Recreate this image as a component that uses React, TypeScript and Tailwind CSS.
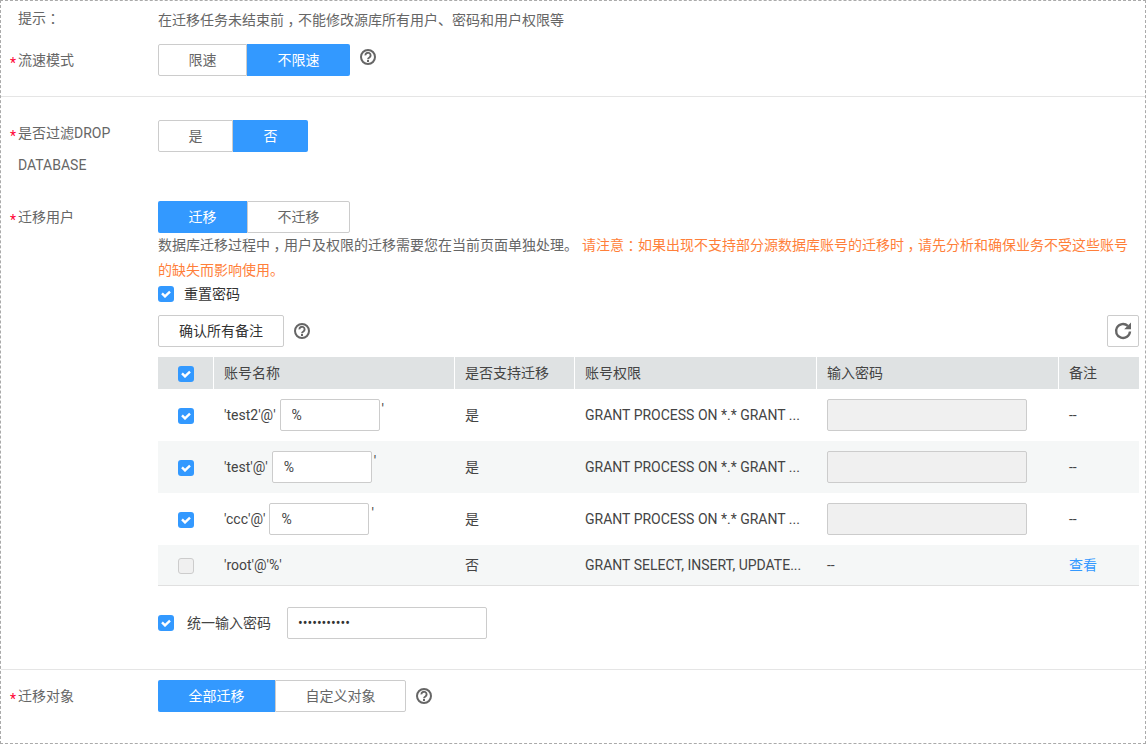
import { ReactNode } from "react";

function HelpIcon() {
  return (
    <svg width="16" height="16" viewBox="0 0 16 16" fill="none" className="shrink-0">
      <circle cx="8" cy="8" r="7" stroke="#666" strokeWidth="2" />
      <path d="M5.4 6.4a2.6 2.6 0 1 1 4 2.1c-.9.6-1.4 1-1.4 1.8" stroke="#666" strokeWidth="1.9" />
      <rect x="7" y="11" width="2" height="2" fill="#666" />
    </svg>
  );
}

function RefreshIcon() {
  return (
    <svg width="20" height="20" viewBox="0 0 20 20" fill="none">
      <path d="M17 10.5a7 7 0 1 1-2.2-5.6" stroke="#666" strokeWidth="2.4" />
      <path d="M18 1.5v6.8h-6.8z" fill="#666" />
    </svg>
  );
}

function Check({ off }: { off?: boolean }) {
  if (off) {
    return <span className="block w-4 h-4 rounded-[3px] border border-[#ccc] bg-[#f0f0f0] shrink-0" />;
  }
  return (
    <span className="flex items-center justify-center w-4 h-4 rounded-[3px] bg-[#3399ff] shrink-0">
      <svg width="10" height="8" viewBox="0 0 10 8" fill="none">
        <path d="M1 3.4l3 3 5-4.8" stroke="#fff" strokeWidth="2.4" />
      </svg>
    </span>
  );
}

function Toggle({ items, active }: { items: [string, number][]; active: number }) {
  return (
    <div className="flex h-8">
      {items.map(([label, width], i) => (
        <div
          key={label}
          style={{ width }}
          className={
            i === active
              ? "flex items-center justify-center bg-[#3399ff] text-white first:rounded-l-[2px] last:rounded-r-[2px]"
              : "flex items-center justify-center border border-[#ccc] bg-white text-[#666] first:rounded-l-[2px] last:rounded-r-[2px]"
          }
        >
          {label}
        </div>
      ))}
    </div>
  );
}

function Label({ children }: { children: ReactNode }) {
  return (
    <div className="w-[158px] shrink-0 pl-[10px] leading-8 text-[#666]">
      <span className="relative top-[3px] inline-block w-2 text-[#ff0033]">*</span>
      {children}
    </div>
  );
}

// the reference centres these two marks in their cell
function Mark({ children }: { children: ReactNode }) {
  return <span className="inline-block w-[14px] text-center [font-feature-settings:'halt']">{children}</span>;
}

const grantProcess = "GRANT PROCESS ON *.* GRANT ...";

const rows = [
  { name: "'test2'@'" },
  { name: "'test'@'" },
  { name: "'ccc'@'" },
];

export default function App() {
  return (
    <div className="h-[744px] w-[1146px] overflow-hidden bg-white border border-dashed border-[#aaa] text-sm font-['Roboto','Noto_Sans_CJK_SC',sans-serif]">
      <div className="flex h-[39px] pt-[2px] text-[#666]">
        <div className="w-[157px] pl-[17px] leading-[30px]">提示<Mark>：</Mark></div>
        <div className="leading-[34px]">在迁移任务未结束前<Mark>，</Mark>不能修改源库所有用户、密码和用户权限等</div>
      </div>

      <div className="flex h-[53px] border-b border-[#e5e5e5] -mx-px mt-[4px]">
        <Label>流速模式</Label>
        <Toggle items={[["限速", 89], ["不限速", 103]]} active={1} />
        <span className="ml-[10px] mt-[5px]"><HelpIcon /></span>
      </div>

      <div className="flex h-[64px] mt-[23px] -ml-px">
        <div className="-mt-[3px]">
          <Label>
            是否过滤DROP
            <br />
            <span className="pl-2">DATABASE</span>
          </Label>
        </div>
        <Toggle items={[["是", 75], ["否", 75]]} active={1} />
      </div>

      <div className="flex mt-[17px] -ml-px">
        <Label>迁移用户</Label>
        <div className="w-[981px]">
          <Toggle items={[["迁移", 89], ["不迁移", 103]]} active={0} />
          <div className="leading-[25px] whitespace-nowrap text-[#666]">
            数据库迁移过程中<Mark>，</Mark>用户及权限的迁移需要您在当前页面单独处理。
            <span className="ml-[4px] text-[#ff7f3a]">
              请注意<Mark>：</Mark>如果出现不支持部分源数据库账号的迁移时<Mark>，</Mark>请先分析和确保业务不受这些账号
            </span>
          </div>
          <div className="leading-[25px] text-[#ff7f3a]">的缺失而影响使用。</div>
          <div className="flex items-center h-4 mt-[3px] gap-[10px] text-[#333]">
            <Check />
            <span>重置密码</span>
          </div>
          <div className="flex items-center mt-[13px]">
            <div className="flex items-center justify-center w-[126px] h-8 border border-[#ccc] rounded-[2px] text-[#333]">
              确认所有备注
            </div>
            <span className="ml-[10px]"><HelpIcon /></span>
            <div className="ml-auto flex items-center justify-center w-8 h-8 border border-[#ccc] rounded-[2px]">
              <RefreshIcon />
            </div>
          </div>

          <table className="mt-[10px] w-[981px] table-fixed border-separate border-spacing-0 text-[#444]">
            <colgroup>
              <col className="w-[56px]" />
              <col className="w-[241px]" />
              <col className="w-[120px]" />
              <col className="w-[242px]" />
              <col className="w-[242px]" />
              <col className="w-[80px]" />
            </colgroup>
            <thead>
              <tr className="h-8 bg-[#dfe2e3] text-left">
                <th className="pl-5 pt-[2px] font-normal border-r border-white"><Check /></th>
                <th className="pl-[10px] font-normal border-r border-white">账号名称</th>
                <th className="pl-[10px] font-normal border-r border-white">是否支持迁移</th>
                <th className="pl-[10px] font-normal border-r border-white">账号权限</th>
                <th className="pl-[10px] font-normal border-r border-white">输入密码</th>
                <th className="pl-[10px] font-normal">备注</th>
              </tr>
            </thead>
            <tbody>
              {rows.map((row, i) => (
                <tr key={row.name} className={i === 1 ? "h-[52px] bg-[#f5f7f7]" : "h-[52px]"}>
                  <td className="pl-5 pt-[2px]"><Check /></td>
                  <td className="pl-[10px]">
                    <div className="flex items-center">
                      <span>{row.name}</span>
                      <input
                        readOnly
                        value="%"
                        className="ml-[4px] w-[100px] h-8 px-[11px] border border-[#ccc] rounded-[2px] bg-white text-[#444] outline-none"
                      />
                      <span className="ml-[2px] -mt-[12px]">'</span>
                    </div>
                  </td>
                  <td className="pl-[10px]">是</td>
                  <td className="pl-[10px] truncate">{grantProcess}</td>
                  <td className="pl-[10px]">
                    <div className="w-[200px] h-8 border border-[#ccc] rounded-[2px] bg-[#f0f0f0]" />
                  </td>
                  <td className="pl-[10px]">--</td>
                </tr>
              ))}
              <tr className="h-[41px] bg-[#f5f7f7]">
                <td className="pl-5 pt-[2px] border-b border-[#e0e0e0]"><Check off /></td>
                <td className="pl-[10px] border-b border-[#e0e0e0]">'root'@'%'</td>
                <td className="pl-[10px] border-b border-[#e0e0e0]">否</td>
                <td className="pl-[10px] truncate border-b border-[#e0e0e0]">GRANT SELECT, INSERT, UPDATE...</td>
                <td className="pl-[10px] border-b border-[#e0e0e0]">--</td>
                <td className="pl-[10px] border-b border-[#e0e0e0] text-[#3399ff]">查看</td>
              </tr>
            </tbody>
          </table>

          <div className="flex items-center mt-[21px] text-[#444]">
            <Check />
            <span className="ml-[13px]">统一输入密码</span>
            <input
              readOnly
              type="password"
              value="12345678901"
              className="ml-[16px] w-[200px] h-8 px-[10px] border border-[#ccc] rounded-[2px] bg-white text-[#333] outline-none"
            />
          </div>
        </div>
      </div>

      <div className="flex -mx-px mt-[30px] pt-[10px] border-t border-[#e5e5e5]">
        <Label>迁移对象</Label>
        <Toggle items={[["全部迁移", 117], ["自定义对象", 131]]} active={0} />
        <span className="ml-[10px] mt-[8px]"><HelpIcon /></span>
      </div>
    </div>
  );
}
